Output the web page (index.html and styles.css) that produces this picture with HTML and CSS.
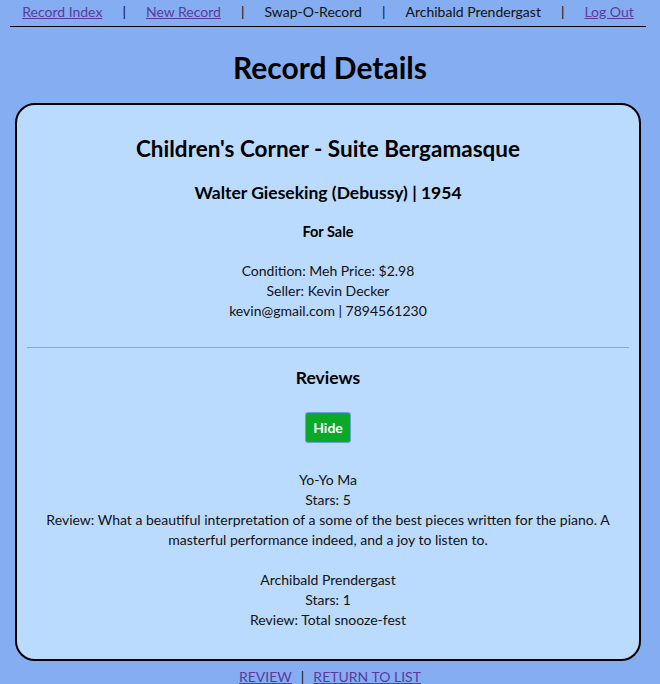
FILE: index.html
```html
<!DOCTYPE html>
<html lang="en">
<head>
<meta charset="utf-8">
<title>Record Details</title>
<link rel="stylesheet" href="styles.css">
</head>
<body>
<nav class="topnav">
  <a href="#">Record Index</a>
  <span class="sep">|</span>
  <a href="#">New Record</a>
  <span class="sep">|</span>
  <span>Swap-O-Record</span>
  <span class="sep">|</span>
  <span>Archibald Prendergast</span>
  <span class="sep">|</span>
  <a href="#">Log Out</a>
</nav>
<h1 class="page-title">Record Details</h1>
<main class="card">
  <h2 class="rec-title">Children's Corner - Suite Bergamasque</h2>
  <h3 class="rec-artist">Walter Gieseking (Debussy) | 1954</h3>
  <h4 class="rec-status">For Sale</h4>
  <p class="info">Condition: Meh Price: $2.98<br>Seller: Kevin Decker<br>kevin@gmail.com | 7894561230</p>
  <hr class="divider">
  <h3 class="reviews-title">Reviews</h3>
  <button class="hide-btn" type="button">Hide</button>
  <div class="reviews">
    <p class="review">Yo-Yo Ma<br>Stars: 5<br>Review: What a beautiful interpretation of a some of the best pieces written for the piano. A masterful performance indeed, and a joy to listen to.</p>
    <p class="review">Archibald Prendergast<br>Stars: 1<br>Review: Total snooze-fest</p>
  </div>
</main>
<footer class="bottom-links">
  <a href="#">REVIEW</a>
  <span class="sep">|</span>
  <a href="#">RETURN TO LIST</a>
</footer>
</body>
</html>
```
FILE: styles.css
```css
html, body {
  margin: 0;
  padding: 0;
}
body {
  background: #84aef1;
  font-family: Lato, "Noto Sans", sans-serif;
  font-size: 14px;
  line-height: 20px;
  color: #111;
  text-align: center;
}
a {
  color: #5b3a9e;
}
.topnav {
  margin: 0 14px 0 10px;
  height: 27px;
  border-bottom: 1px solid #000;
  display: flex;
  justify-content: center;
  align-items: center;
  gap: 20px;
  box-sizing: border-box;
  padding-bottom: 2px;
  white-space: nowrap;
}
.topnav > * {
  flex: none;
}
.page-title {
  margin: 22px 0 0;
  font-size: 30px;
  line-height: 36px;
  font-weight: 700;
  color: #000;
}
.card {
  display: block;
  margin: 18px 19px 0 15px;
  background: #bbdbfe;
  border: 2px solid #000;
  border-radius: 20px;
  padding: 30px 10px 29px;
}
.rec-title {
  margin: 0;
  font-size: 22.5px;
  line-height: 28px;
  color: #000;
}
.rec-artist {
  margin: 19px 0 0;
  font-size: 17.5px;
  line-height: 22px;
  color: #000;
}
.rec-status {
  margin: 19px 0 0;
  font-size: 14.5px;
  line-height: 18px;
  color: #000;
}
.info {
  margin: 20px 0 0;
}
.divider {
  margin: 26px 0 0;
  border: 0;
  border-top: 1px solid #9aa3ad;
  height: 0;
}
.reviews-title {
  margin: 19px 0 0;
  font-size: 17.5px;
  line-height: 22px;
  color: #000;
}
.hide-btn {
  margin: 23px 0 0;
  background: #0aa928;
  color: #fff;
  border: 1px solid #6aa0e8;
  border-radius: 3px;
  font-family: inherit;
  font-weight: 700;
  font-size: 14px;
  padding: 0 7px;
  height: 31px;
  width: 46px;
}
.reviews {
  margin-top: 27px;
}
.review {
  margin: 0 0 20px;
}
.review:last-child {
  margin-bottom: 0;
}
.bottom-links {
  display: flex;
  justify-content: center;
  gap: 9px;
  padding-top: 6px;
}
```
